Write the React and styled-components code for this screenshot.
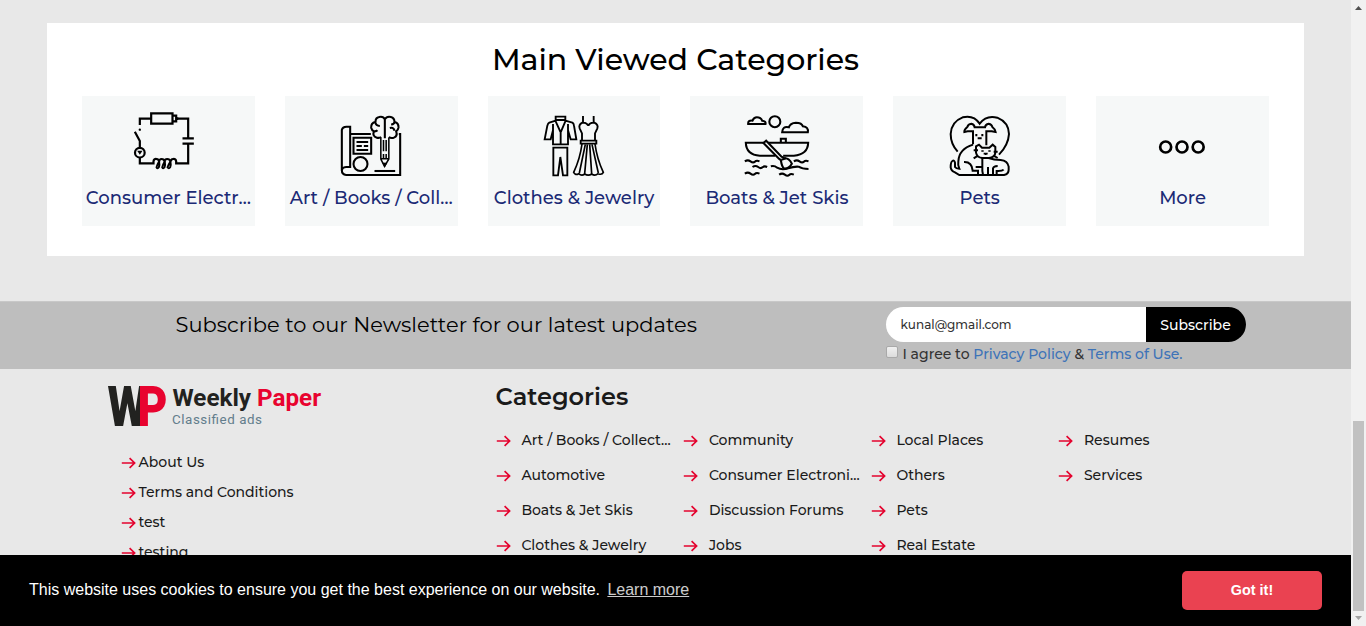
import React from "react";
import styled, { createGlobalStyle } from "styled-components";

const Global = createGlobalStyle`
  * { box-sizing: border-box; }
  html, body { margin: 0; overflow: hidden; background: #e8e8e8; }
  body { font-family: Montserrat, Inter, "Open Sans", sans-serif; font-weight: 500; color: #1a1a1a; }
  a { text-decoration: none; color: inherit; }
`;

const Window = styled.div`
  display: flex;
  width: 1366px;
  height: 626px;
  overflow: hidden;
`;
const Page = styled.div`
  position: relative;
  width: 1351px;
  height: 626px;
  overflow: hidden;
  background: #e8e8e8;
`;

/* Viewed categories */
const Panel = styled.section`
  margin: 23px 47px 0;
  height: 233px;
  padding: 0 35px;
  background: #fff;
`;
const PanelTitle = styled.h2`
  margin: 0;
  height: 73px;
  line-height: 73px;
  text-align: center;
  font-size: 30px;
  font-weight: 500;
  color: #000;
`;
const Cards = styled.div`
  display: grid;
  grid-template-columns: repeat(6, 1fr);
  gap: 30px;
`;
const Card = styled.a`
  display: flex;
  flex-direction: column;
  align-items: center;
  height: 130px;
  padding-top: 14px;
  background: #f6f8f8;
`;
const CardIcon = styled.svg`
  width: 72px;
  height: 72px;
  fill: none;
  stroke: #000;
  flex: none;
`;
const CardLabel = styled.span`
  line-height: 32px;
  font-size: 18px;
  white-space: nowrap;
  color: #1b2a75;
`;

/* Newsletter */
const Newsletter = styled.section`
  display: flex;
  margin-top: 45px;
  height: 68px;
  background: #bebebe;
  border-top: 1px solid #c8c8c8;
`;
const NewsText = styled.p`
  margin: 0;
  padding: 9px 0 0 175.5px;
  width: 886px;
  line-height: 28px;
  font-size: 21px;
  font-weight: 400;
  color: #000;
`;
const Form = styled.div`
  padding-top: 5px;
`;
const Field = styled.div`
  display: flex;
  width: 360px;
  height: 35px;
  border-radius: 18px;
  overflow: hidden;
  background: #fff;
`;
const Email = styled.span`
  width: 260px;
  padding-left: 14.6px;
  line-height: 35px;
  font-size: 12px;
  color: #333;
`;
const SubscribeButton = styled.span`
  width: 100px;
  padding-left: 14.3px;
  line-height: 36px;
  font-size: 14px;
  background: #000;
  color: #fff;
`;
const Agree = styled.div`
  display: flex;
  align-items: center;
  height: 24px;
  font-size: 14px;
  white-space: pre;
  color: #333;
  a { color: #3d73b8; }
`;
const Checkbox = styled.span`
  width: 12px;
  height: 12px;
  margin: -4px 4.5px 0 0;
  border: 1px solid #a9a9a9;
  border-radius: 2px;
  background: linear-gradient(#f0f0f0, #dcdcdc);
`;

/* Footer */
const Footer = styled.footer`
  display: flex;
  padding-left: 108px;
`;
const Brand = styled.div`
  width: 387.6px;
`;
const Logo = styled.svg`
  display: block;
  width: 220px;
  height: 50px;
  margin-top: 12px;
  overflow: visible;
  font-family: Roboto, sans-serif;
`;
const AboutList = styled.nav`
  padding: 16px 0 0 13px;
`;
const AboutLink = styled.a`
  display: flex;
  align-items: center;
  gap: 2.5px;
  height: 30px;
  font-size: 14px;
`;
const Arrow = styled.svg`
  width: 15px;
  height: 12px;
  margin-top: 2px;
  flex: none;
  fill: none;
  stroke: #e4032e;
  stroke-width: 1.7;
`;
const Directory = styled.div`
  width: 752px;
`;
const DirectoryTitle = styled.h3`
  margin: 0;
  padding-top: 10px;
  height: 53px;
  line-height: 36px;
  font-size: 24px;
  font-weight: 600;
`;
const DirectoryGrid = styled.div`
  display: grid;
  grid-auto-flow: column;
  grid-template-rows: repeat(4, 35px);
  grid-template-columns: repeat(4, 187.5px);
`;
const DirectoryLink = styled.a`
  display: flex;
  align-items: center;
  gap: 10.8px;
  height: 35px;
  font-size: 14px;
  white-space: nowrap;
`;

/* Cookie notice lies over the page */
const CookieBar = styled.div`
  position: absolute;
  left: 0;
  right: 0;
  bottom: 0;
  display: flex;
  align-items: center;
  justify-content: space-between;
  height: 71px;
  padding: 0 29px;
  background: #000;
  color: #fff;
  font: 400 16px "Liberation Sans", Arial, sans-serif;
  white-space: pre;
`;
const CookieText = styled.span`
  padding-bottom: 2px;
`;
const LearnMore = styled.a`
  margin-left: 7.4px;
  opacity: 0.8;
  && { text-decoration: underline; }
`;
const GotIt = styled.span`
  width: 140px;
  height: 39px;
  border-radius: 5px;
  background: #ea4251;
  text-align: center;
  line-height: 38px;
  font-size: 14.4px;
  font-weight: 700;
`;

/* Scrollbar */
const Scrollbar = styled.div`
  display: flex;
  flex-direction: column;
  align-items: center;
  justify-content: space-between;
  width: 15px;
  height: 626px;
  background: #f1f1f1;
`;
const ScrollArrow = styled.svg`
  width: 15px;
  height: 15px;
  fill: ${p => p.$color};
`;
const ScrollThumb = styled.div`
  width: 11px;
  height: 190px;
  margin-top: auto;
  background: #c1c1c1;
`;

const Circuit = () => (
  <CardIcon viewBox="155.5 60 216 216" strokeWidth="6.6">
    <path d="M179 105V86H213M292 86H324V144M307 145H341M307 161H341M324 162V220H288V214Q287 206 279 207Q272 208 271 214M179 202V220H220V214Q221 206 229 207Q236 208 237 214M179 173V153L164 125" />
    <path d="M213 70H277V101H213ZM277 77H288V94H277M291 82V90" />
    <circle cx="179" cy="188" r="14.5" />
    <path d="M171 182L179 194L187 182Z" fill="#000" stroke="none" />
    <circle cx="179" cy="119" r="3.5" fill="#000" stroke="none" />
    <path d="M237 215Q237 207 244 207Q252 207 253 215M253 215Q254 207 261 207Q269 207 271 215M237 214Q230 226 229 232Q232 238 236 232Q239 224 237 214M254 214Q247 226 246 232Q249 238 253 232Q256 224 254 214M271 214Q264 226 262 232Q266 238 270 232Q273 224 271 214" strokeWidth="5.6" />
  </CardIcon>
);
const ArtBook = () => (
  <CardIcon viewBox="152.5 60 216 216" strokeWidth="6.2">
    <path d="M260 132H199M344 132H348V255H186Q173 254 173 241V120Q175 110 187 110H198V231H186Q173 232 173 243" />
    <path d="M208 143H261V191H208ZM217 156H252M217 168H233M239 168H252M217 180H252" />
    <circle cx="229" cy="222" r="21" />
    <path d="M271 243H333" />
    <path d="M290 143V207L301 229L314 207V143M290 206H314M298 150V184M306 150V184M298 192V204M306 192V204" strokeWidth="4.6" />
    <path d="M296 219H308L302 230Z" fill="#000" strokeWidth="2" />
    <path d="M302 88V145M302 88Q297 78 285 81Q274 83 274 95Q260 99 261 113Q263 121 269 124Q264 139 278 143Q286 145 291 141M302 88Q308 78 320 81Q331 84 331 96Q344 99 343 113Q342 120 336 124Q341 138 329 143Q320 146 314 141M274 98Q275 107 287 108M269 124Q276 125 280 121M317 114Q328 111 331 122M331 96Q329 104 321 103" />
  </CardIcon>
);
const Outfit = () => (
  <CardIcon viewBox="156 60 216 216" strokeWidth="5.6">
    <path d="M209 80H238V94L224 127L209 94ZM209 90H238M209 92L190 98Q186 100 184 107L176 148H194L201 121M238 92L259 98Q263 100 264 107L271 148H254L246 121M201 102V163H246V102M224 127V163" />
    <path d="M202 173H244V256H231L223 201L216 256H202Z" />
    <path d="M291 78V101M323 78V101M307 107Q301 96 289 98Q277 104 281 115L288 130V151M307 107Q312 96 325 98Q338 104 334 115L327 130V151M284 152H331V161H284Z" />
    <path d="M288 162Q282 207 263 247Q268 257 278 251Q287 259 296 252Q307 259 317 252Q327 259 336 251Q348 256 352 247Q333 207 327 162M298 163L280 249M304 163L296 251M311 163L317 251M318 163L337 249" strokeWidth="5" />
  </CardIcon>
);
const Boat = () => (
  <CardIcon viewBox="159.5 60 216 216" strokeWidth="6.2">
    <path d="M181 102H233Q235 93 223 92Q219 82 207 82Q198 82 194 92Q180 90 181 102Z" />
    <circle cx="261" cy="95" r="16.5" />
    <path d="M283 127H360Q363 111 345 109Q342 98 324 98Q307 99 303 112Q284 107 283 127Z" />
    <path d="M229 158H174Q175 194 216 197H262M241 158H361Q360 193 318 197H286M279 157V146H294V157" />
    <path d="M227 159L235 152L281 200L289 204Q304 204 312 221Q304 236 289 236Q282 231 279 210L274 207Z" />
    <path d="M281 209L295 205" />
    <path d="M171 214Q180 208 188 214T201 215T215 214M194 231Q203 225 211 231T224 232T238 231M171 251Q180 245 188 251T201 252T215 251M274 254Q283 248 291 254T304 255T318 254M318 214Q327 208 335 214T348 215T362 214M249 229Q260 226 268 233Q281 241 301 235Q318 229 332 230Q343 237 362 237" />
  </CardIcon>
);
const PetPair = () => (
  <CardIcon viewBox="157 60 216 216" strokeWidth="6">
    <path d="M198 185Q177 162 177 132Q179 95 213 82Q246 74 264 101Q284 74 317 83Q351 97 352 132Q350 165 322 194" />
    <path d="M244 163V124H228L218 126Q217 119 227 111Q229 102 239 101Q248 103 249 112H280Q281 103 291 101Q301 103 302 111Q311 118 312 126L300 124H284V166" />
    <path d="M254 132V139M272 132V139M258 145H270" />
    <path d="M244 164Q202 177 200 214Q198 226 203 236Q193 236 190 231V218Q188 209 182 213Q177 216 177 232Q178 242 190 247L203 255H337Q351 252 351 239V230Q348 212 327 210Q306 210 291 204" />
    <path d="M253 188V169L262 164L271 173H293L303 164L311 171V188Q310 202 292 204H272Q256 203 253 188ZM246 181H259M246 205L260 196M306 185H318M306 197L318 204" />
    <path d="M272 204V243L274 254M217 216Q241 215 243 242H259V254M252 231H270M289 231V254M304 254V236Q305 228 318 228M315 254V243Q331 244 336 239" />
    <path d="M269 183H276M290 183H297M276 191H288M282 189V195" strokeWidth="5" />
  </CardIcon>
);
const Dots = () => (
  <CardIcon viewBox="159.5 60 216 216" strokeWidth="8">
    <circle cx="215.5" cy="171" r="16.5" />
    <circle cx="264.5" cy="171" r="16.5" />
    <circle cx="313" cy="171" r="16.5" />
  </CardIcon>
);

const RedArrow = () => (
  <Arrow viewBox="0 0 15 12">
    <path d="M0.8 6H13.5M8.6 1.2L13.6 6L8.6 10.8" />
  </Arrow>
);

const cards = [
  ["Consumer Electr…", Circuit],
  ["Art / Books / Coll…", ArtBook],
  ["Clothes & Jewelry", Outfit],
  ["Boats & Jet Skis", Boat],
  ["Pets", PetPair],
  ["More", Dots],
];
const about = ["About Us", "Terms and Conditions", "test", "testing"];
const directory = [
  "Art / Books / Collect…",
  "Automotive",
  "Boats & Jet Skis",
  "Clothes & Jewelry",
  "Community",
  "Consumer Electroni…",
  "Discussion Forums",
  "Jobs",
  "Local Places",
  "Others",
  "Pets",
  "Real Estate",
  "Resumes",
  "Services",
];

export default function App() {
  return (
    <Window>
      <Global />
      <Page>
        <Panel>
          <PanelTitle>Main Viewed Categories</PanelTitle>
          <Cards>
            {cards.map(([label, Icon]) => (
              <Card key={label}>
                <Icon />
                <CardLabel>{label}</CardLabel>
              </Card>
            ))}
          </Cards>
        </Panel>

        <Newsletter>
          <NewsText>Subscribe to our Newsletter for our latest updates</NewsText>
          <Form>
            <Field>
              <Email>kunal@gmail.com</Email>
              <SubscribeButton>Subscribe</SubscribeButton>
            </Field>
            <Agree>
              <Checkbox />
              I agree to <a>Privacy Policy</a> &amp; <a>Terms of Use.</a>
            </Agree>
          </Form>
        </Newsletter>

        <Footer>
          <Brand>
            <Logo viewBox="0 0 220 50">
              <text x="-0.5" y="45" fontSize="56.3" fontWeight="900" fill="#222220" textLength="40" lengthAdjust="spacingAndGlyphs">W</text>
              <text x="29.6" y="45" fontSize="56.3" fontWeight="900" fill="#e8032f" textLength="30" lengthAdjust="spacingAndGlyphs">P</text>
              <text x="64.5" y="24.5" fontSize="24.2" fontWeight="700" fill="#222220" textLength="78.5" lengthAdjust="spacingAndGlyphs">Weekly</text>
              <text x="149" y="24.5" fontSize="24.2" fontWeight="700" fill="#e8032f" textLength="64" lengthAdjust="spacingAndGlyphs">Paper</text>
              <text x="64" y="43.3" fontSize="13.4" fontWeight="400" fill="#637d8c" textLength="90" lengthAdjust="spacing">Classified ads</text>
            </Logo>
            <AboutList>
              {about.map((label) => (
                <AboutLink key={label}>
                  <RedArrow />
                  {label}
                </AboutLink>
              ))}
            </AboutList>
          </Brand>
          <Directory>
            <DirectoryTitle>Categories</DirectoryTitle>
            <DirectoryGrid>
              {directory.map((label) => (
                <DirectoryLink key={label}>
                  <RedArrow />
                  {label}
                </DirectoryLink>
              ))}
            </DirectoryGrid>
          </Directory>
        </Footer>

        <CookieBar>
          <CookieText>
            This website uses cookies to ensure you get the best experience on our website.
            <LearnMore>Learn more</LearnMore>
          </CookieText>
          <GotIt>Got it!</GotIt>
        </CookieBar>
      </Page>
      <Scrollbar>
        <ScrollArrow $color="#505050" viewBox="0 0 15 15">
          <path d="M4 10L7.5 6L11 10Z" />
        </ScrollArrow>
        <ScrollThumb />
        <ScrollArrow $color="#a3a3a3" viewBox="0 0 15 15">
          <path d="M4 5L7.5 9L11 5Z" />
        </ScrollArrow>
      </Scrollbar>
    </Window>
  );
}
